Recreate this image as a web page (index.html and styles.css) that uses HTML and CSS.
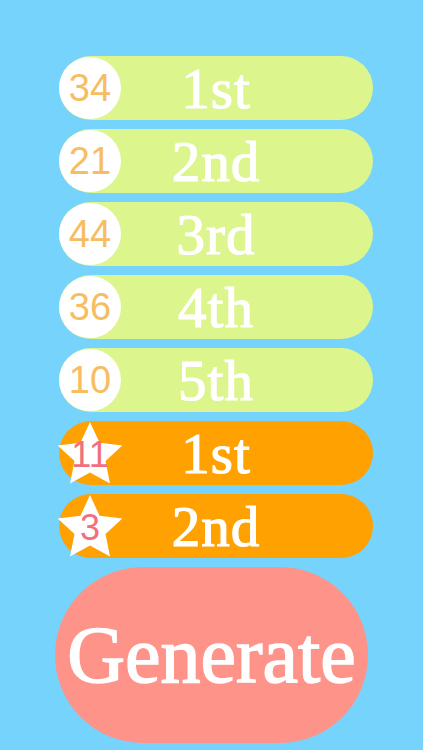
FILE: index.html
```
<!DOCTYPE html>
<html lang="en">
<head>
    <meta charset="UTF-8">
    <meta name="viewport" content="width=device-width, initial-scale=1.0">
    <title>Lotto Numbers</title>
    <link rel="stylesheet" href="styles.css">
</head>
<body>
    <div class="board">
        <div class="pill main">
            <div class="ball">34</div>
            <div class="label">1st</div>
        </div>
        <div class="pill main">
            <div class="ball">21</div>
            <div class="label">2nd</div>
        </div>
        <div class="pill main">
            <div class="ball">44</div>
            <div class="label">3rd</div>
        </div>
        <div class="pill main">
            <div class="ball">36</div>
            <div class="label">4th</div>
        </div>
        <div class="pill main">
            <div class="ball">10</div>
            <div class="label">5th</div>
        </div>
        <div class="pill bonus">
            <div class="star">
                <svg viewBox="0 0 100 91"><polygon points="50,0 64.1,30.6 97.55,34.55 72.8,57.4 79.4,90.45 50,74 20.6,90.45 27.2,57.4 2.45,34.55 35.9,30.6" fill="#fff"/></svg>
                <span>11</span>
            </div>
            <div class="label">1st</div>
        </div>
        <div class="pill bonus">
            <div class="star">
                <svg viewBox="0 0 100 91"><polygon points="50,0 64.1,30.6 97.55,34.55 72.8,57.4 79.4,90.45 50,74 20.6,90.45 27.2,57.4 2.45,34.55 35.9,30.6" fill="#fff"/></svg>
                <span>3</span>
            </div>
            <div class="label">2nd</div>
        </div>
        <button class="generate">Generate</button>
    </div>
</body>
</html>
```

FILE: styles.css
```
body {
    margin: 0;
    height: 100vh;
    background-color: #76d3fb;
    font-family: "Liberation Serif", "Times New Roman", serif;
    overflow: hidden;
}
.board {
    display: flex;
    flex-direction: column;
    gap: 9px;
    padding: 56px 0 0 59px;
    width: 314px;
}
.pill {
    display: grid;
    height: 64px;
    border-radius: 32px;
    align-items: center;
}
.pill > * {
    grid-area: 1 / 1;
}
.main {
    background-color: #dcf58c;
}
.bonus {
    background-color: #ffa100;
}
.label {
    justify-self: center;
    color: #fff;
    font-size: 57px;
    -webkit-text-stroke: 1.2px #fff;
    letter-spacing: 1px;
    line-height: 1;
}
.ball {
    justify-self: start;
    width: 62px;
    height: 62px;
    border-radius: 50%;
    background-color: #fff;
    color: #f6bd62;
    font-family: "Liberation Sans", Arial, sans-serif;
    font-size: 38px;
    display: flex;
    align-items: center;
    justify-content: center;
}
.star {
    justify-self: start;
    display: grid;
    width: 68px;
    height: 62px;
    margin-left: -3px;
}
.star > * {
    grid-area: 1 / 1;
}
.star svg {
    width: 68px;
    height: 62px;
}
.star span {
    align-self: center;
    justify-self: center;
    color: #f0707f;
    font-family: "Liberation Sans", Arial, sans-serif;
    font-size: 36px;
    margin-top: 4px;
}
.generate {
    margin: 0 0 0 -4px;
    width: 313px;
    height: 176px;
    border: none;
    border-radius: 88px;
    background-color: #fe9489;
    color: #fff;
    font-family: "Liberation Serif", "Times New Roman", serif;
    font-size: 80px;
    -webkit-text-stroke: 1.5px #fff;
    padding: 0;
    cursor: pointer;
}
```
